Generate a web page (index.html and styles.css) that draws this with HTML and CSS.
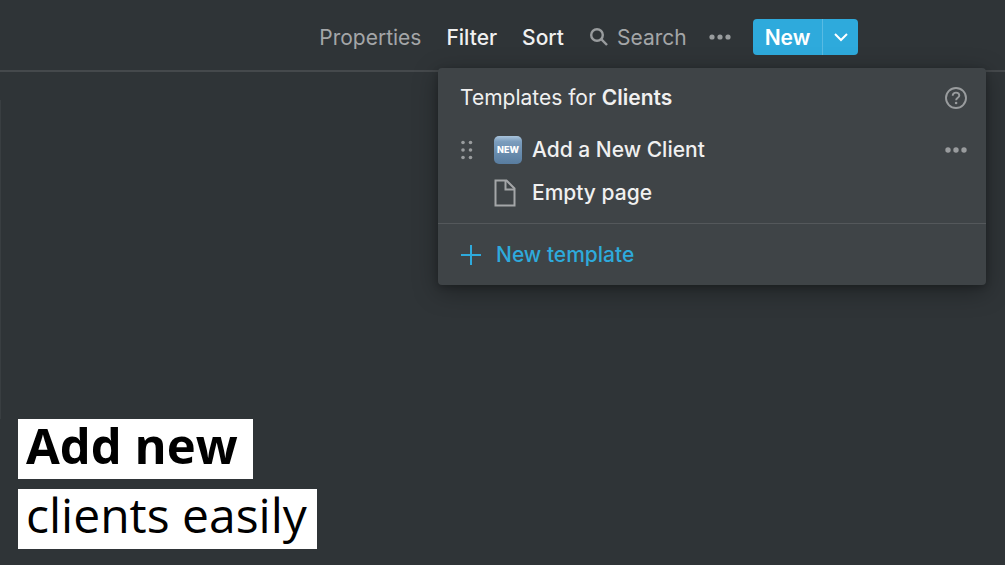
FILE: index.html
```
<!DOCTYPE html>
<html lang="en">
<head>
    <meta charset="UTF-8">
    <meta name="viewport" content="width=device-width, initial-scale=1.0">
    <title>Clients</title>
    <link rel="stylesheet" href="styles.css">
</head>
<body>
    <header class="toolbar">
        <button type="button" class="tool muted">Properties</button>
        <button type="button" class="tool">Filter</button>
        <button type="button" class="tool">Sort</button>
        <div class="search">
            <label for="search" aria-label="Search">
                <svg width="20" height="20" viewBox="0 0 20 20" fill="none" stroke="#999c9e" stroke-width="2.4">
                    <circle cx="8" cy="8" r="5.8"/>
                    <path d="M12.2 12.2L18 18"/>
                </svg>
            </label>
            <input type="text" id="search" placeholder="Search">
        </div>
        <button type="button" class="more" aria-label="More">
            <svg width="24" height="8" viewBox="0 0 24 8" fill="#999c9e">
                <circle cx="4" cy="4" r="2.6"/>
                <circle cx="12" cy="4" r="2.6"/>
                <circle cx="20" cy="4" r="2.6"/>
            </svg>
        </button>

        <div class="new-group">
            <button type="button" class="new">New</button>
            <button type="button" class="new-arrow" aria-label="Show templates">
                <svg width="14" height="10" viewBox="0 0 14 10" fill="none" stroke="#fff" stroke-width="2">
                    <path d="M1 2L7 8L13 2"/>
                </svg>
            </button>

            <div class="menu">
                <div class="menu-section">
                    <div class="menu-title">
                        <span>Templates for <b>Clients</b></span>
                        <button type="button" aria-label="Help">
                            <svg width="24" height="24" viewBox="0 0 24 24" fill="none" stroke="#999c9e" stroke-width="1.9">
                                <circle cx="12" cy="12" r="10"/>
                                <path d="M8.7 9.8C8.7 7.8 10.1 6.6 12 6.6S15.3 7.8 15.3 9.5C15.3 11.8 12.1 11.7 12.1 14.3"/>
                                <circle cx="12.1" cy="17" r="1.3" fill="#999c9e" stroke="none"/>
                            </svg>
                        </button>
                    </div>
                    <div class="menu-row">
                        <svg class="drag" width="14" height="20" viewBox="0 0 14 20" fill="#999c9e">
                            <circle cx="3" cy="2.5" r="1.8"/>
                            <circle cx="10.5" cy="2.5" r="1.8"/>
                            <circle cx="3" cy="10" r="1.8"/>
                            <circle cx="10.5" cy="10" r="1.8"/>
                            <circle cx="3" cy="17.5" r="1.8"/>
                            <circle cx="10.5" cy="17.5" r="1.8"/>
                        </svg>
                        <button type="button" class="template">
                            <span class="new-badge">NEW</span>
                            Add a New Client
                        </button>
                        <button type="button" aria-label="Template options">
                            <svg width="24" height="8" viewBox="0 0 24 8" fill="#999c9e">
                                <circle cx="4" cy="4" r="2.7"/>
                                <circle cx="12" cy="4" r="2.7"/>
                                <circle cx="20" cy="4" r="2.7"/>
                            </svg>
                        </button>
                    </div>
                    <div class="menu-row">
                        <span class="drag"></span>
                        <button type="button" class="template">
                            <svg width="28" height="28" viewBox="0 0 28 28" fill="none" stroke="#a4a6a8" stroke-width="2">
                                <path d="M1.5 1.5H12.5L20.5 9.5V26.5H1.5Z"/>
                                <path d="M11.5 1.5V10.5H20.5"/>
                            </svg>
                            Empty page
                        </button>
                    </div>
                </div>
                <button type="button" class="new-template">
                    <svg width="22" height="22" viewBox="0 0 22 22" fill="none" stroke="#2eaadc" stroke-width="2">
                        <path d="M11 1V21M1 11H21"/>
                    </svg>
                    New template
                </button>
            </div>
        </div>
    </header>

    <div class="board"></div>

    <main class="caption">
        <h1>Add new</h1>
        <p>clients easily</p>
    </main>
</body>
</html>
```
FILE: styles.css
```
* {
    box-sizing: border-box;
}

body {
    margin: 0;
    min-height: 100vh;
    display: flex;
    flex-direction: column;
    background-color: #2f3437;
    color: #f0f0f0;
    font-family: Inter, "Liberation Sans", sans-serif;
    font-size: 21px;
}

button,
input {
    margin: 0;
    padding: 0;
    border: none;
    background: none;
    color: inherit;
    font: inherit;
}

button {
    cursor: pointer;
}

svg {
    display: block;
    flex: none;
}

.toolbar {
    display: flex;
    align-items: center;
    justify-content: flex-end;
    gap: 25px;
    height: 72px;
    padding: 4px 147px 0 20px;
    border-bottom: 2px solid #45494c;
}

.tool {
    font-weight: 500;
}

.muted {
    color: #a4a6a8;
    font-weight: 400;
}

.search {
    display: flex;
    align-items: center;
    gap: 8px;
}

.search input {
    width: 70px;
    outline: none;
}

.search input::placeholder {
    color: #a4a6a8;
    opacity: 1;
}

.more {
    margin: 0 -4px;
}

.new-group {
    position: relative;
    display: flex;
    height: 36px;
    border-radius: 4px;
    background-color: #2eaadc;
    color: #fff;
}

.new {
    width: 69px;
    font-weight: 600;
}

.new-arrow {
    display: flex;
    align-items: center;
    justify-content: center;
    width: 36px;
    border-left: 1px solid #58bbe3;
}

/* dropdown */
.menu {
    position: absolute;
    top: 49px;
    right: -128px;
    width: 548px;
    border-radius: 4px;
    background-color: #3f4447;
    color: #f0f0f0;
    box-shadow: 0 6px 24px rgba(0, 0, 0, 0.35), 0 2px 6px rgba(0, 0, 0, 0.2);
}

.menu-section {
    padding: 8px 18px 9px 22px;
    border-bottom: 1px solid #54585b;
}

.menu-title,
.menu-row {
    display: flex;
    align-items: center;
    justify-content: space-between;
    height: 43px;
}

.menu-title {
    margin-bottom: 9px;
}

.menu-title b {
    font-weight: 600;
}

.drag {
    width: 14px;
    margin-right: 20px;
}

.template {
    display: flex;
    flex: 1;
    align-items: center;
    gap: 10px;
    font-weight: 500;
    text-align: left;
}

.new-badge {
    width: 28px;
    height: 28px;
    border-radius: 5px;
    background: linear-gradient(#a9c4dc 0, #7b9dbd 20%, #587c9f 100%);
    color: #fff;
    font-size: 9px;
    font-weight: 800;
    line-height: 28px;
    text-align: center;
}

.new-template {
    display: flex;
    align-items: center;
    gap: 14px;
    width: 100%;
    height: 61px;
    padding: 0 22px;
    color: #2eaadc;
    font-weight: 500;
}

/* faint edges of the board behind the menu */
.board {
    display: flex;
    flex: 1;
    justify-content: space-between;
    margin-top: 28px;
}

.board::before,
.board::after {
    content: "";
    width: 1px;
    background-color: #393e41;
}

.board::after {
    height: 28%;
}

/* caption */
.caption {
    display: flex;
    flex-direction: column;
    align-items: flex-start;
    gap: 10px;
    padding: 0 18px 16px;
    color: #000;
    font-family: "Open Sans", "Noto Sans", sans-serif;
    font-size: 48px;
    line-height: 52px;
}

.caption h1,
.caption p {
    margin: 0;
    padding: 0 10px 8px 8px;
    background-color: #fff;
}

.caption h1 {
    padding-right: 15px;
    font-size: 49px;
}
```
